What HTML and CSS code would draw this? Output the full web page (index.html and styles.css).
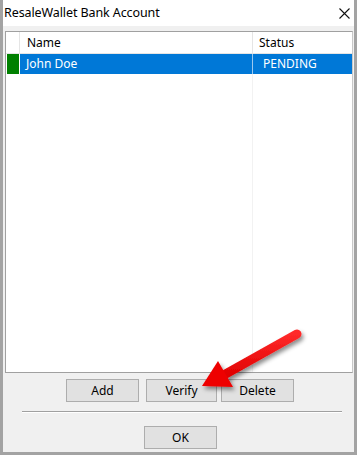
FILE: index.html
```html
<!DOCTYPE html>
<html>
<head>
<meta charset="utf-8">
<link rel="stylesheet" href="styles.css">
</head>
<body>
<div class="window">
  <div class="titlebar">
    <span class="title">ResaleWallet Bank Account</span>
    <svg class="close" width="11" height="11" viewBox="0 0 11 11"><path d="M0.5 0.5 L10.5 10.5 M10.5 0.5 L0.5 10.5" stroke="#111" stroke-width="1.1" fill="none"/></svg>
  </div>
  <div class="body">
    <div class="list">
      <div class="row header">
        <div class="c-ind"></div>
        <div class="c-name">Name</div>
        <div class="c-status">Status</div>
      </div>
      <div class="row selected">
        <div class="c-ind"><div class="flag"></div></div>
        <div class="c-name">John Doe</div>
        <div class="c-status">PENDING</div>
      </div>
      <div class="row empty">
        <div class="c-ind"></div>
        <div class="c-name"></div>
        <div class="c-status"></div>
      </div>
    </div>
    <div class="buttons">
      <button class="btn btn-add">Add</button>
      <button class="btn btn-verify">Verify</button>
      <button class="btn btn-delete">Delete</button>
    </div>
    <div class="sep"></div>
    <div class="ok-row">
      <button class="btn">OK</button>
    </div>
  </div>
  <svg class="arrow" width="357" height="455" viewBox="0 0 357 455">
    <defs>
      <filter id="sh" x="-20%" y="-20%" width="150%" height="150%">
        <feDropShadow dx="2" dy="3" stdDeviation="2" flood-color="#000" flood-opacity="0.45"/>
      </filter>
      <linearGradient id="rg" x1="0" y1="0" x2="0" y2="1">
        <stop offset="0" stop-color="#ff2a2a"/>
        <stop offset="1" stop-color="#e00000"/>
      </linearGradient>
    </defs>
    <g filter="url(#sh)">
      <line x1="297" y1="334" x2="222" y2="376" stroke="url(#rg)" stroke-width="9" stroke-linecap="round"/>
      <polygon points="202,386 218,361 233,387" fill="#ee0000"/>
    </g>
  </svg>
</div>
</body>
</html>
```

FILE: styles.css
```css
* { box-sizing: border-box; }
html, body { margin: 0; padding: 0; }
body {
  font-family: "Noto Sans", "Open Sans", sans-serif;
  font-size: 12px;
  color: #000;
  background: #fff;
}
.window {
  position: relative;
  width: 357px;
  height: 455px;
  border-left: 3px solid #a3a3a3;
  border-right: 3px solid #a3a3a3;
  border-bottom: 3px solid #a3a3a3;
  display: flex;
  flex-direction: column;
  background: #f0f0f0;
}
.titlebar {
  height: 26px;
  background: #fff;
  display: flex;
  align-items: center;
  justify-content: space-between;
  padding: 0 4px 0 1px;
}
.title {
  font-size: 12.5px;
  line-height: 26px;
  letter-spacing: -0.1px;
}
.close { display: block; margin-right: 0; }
.body {
  flex: 1;
  display: flex;
  flex-direction: column;
  padding: 5px 1px 0 2px;
}
.list {
  height: 342px;
  background: #fff;
  border: 1px solid #a0a0a0;
  border-right-color: #c8c8c8;
  display: flex;
  flex-direction: column;
}
.row { display: flex; }
.row.header { height: 22px; border-bottom: 1px solid #e5e5e5; align-items: stretch; }
.row.selected { height: 20px; }
.row.empty { flex: 1; }
.c-ind { width: 14px; border-right: 1px solid #e5e5e5; padding: 0 1px 0 1px; }
.c-name { width: 233px; border-right: 1px solid #e5e5e5; padding-left: 6px; line-height: 20px; }
.c-status { flex: 1; padding-left: 6px; line-height: 20px; }
.header .c-name, .header .c-status { line-height: 22px; }
.header .c-name { padding-left: 7px; }
.selected .c-ind { border-right: 1px solid #fff; }
.selected .flag { background: #008000; height: 100%; width: 12px; }
.selected .c-name, .selected .c-status { background: #0078d7; color: #fff; }
.selected .c-name { border-right: 1px solid #9cc8ef; }
.selected .c-status { padding-left: 10px; }
.empty .c-ind { border-right: none; }
.empty .c-name { border-right: 1px solid #f2f2f2; }
.buttons {
  display: flex;
  margin-top: 6px;
  padding-left: 61px;
}
.btn {
  font-family: "Noto Sans", "Open Sans", sans-serif;
  font-size: 12px;
  color: #000;
  height: 23px;
  width: 73px;
  background: #e1e1e1;
  border: 1px solid #adadad;
  padding: 0;
  margin: 0;
  line-height: 20px;
}
.btn-verify { margin-left: 7px; width: 71px; }
.btn-delete { margin-left: 4px; }
.sep {
  margin: 9px 0 0 17px;
  width: 320px;
  height: 2px;
  border-top: 1px solid #a0a0a0;
  border-bottom: 1px solid #fff;
}
.ok-row {
  margin-top: 13px;
  padding-left: 139px;
  display: flex;
}
.arrow {
  position: absolute;
  left: -3px;
  top: 0;
  pointer-events: none;
}
```
